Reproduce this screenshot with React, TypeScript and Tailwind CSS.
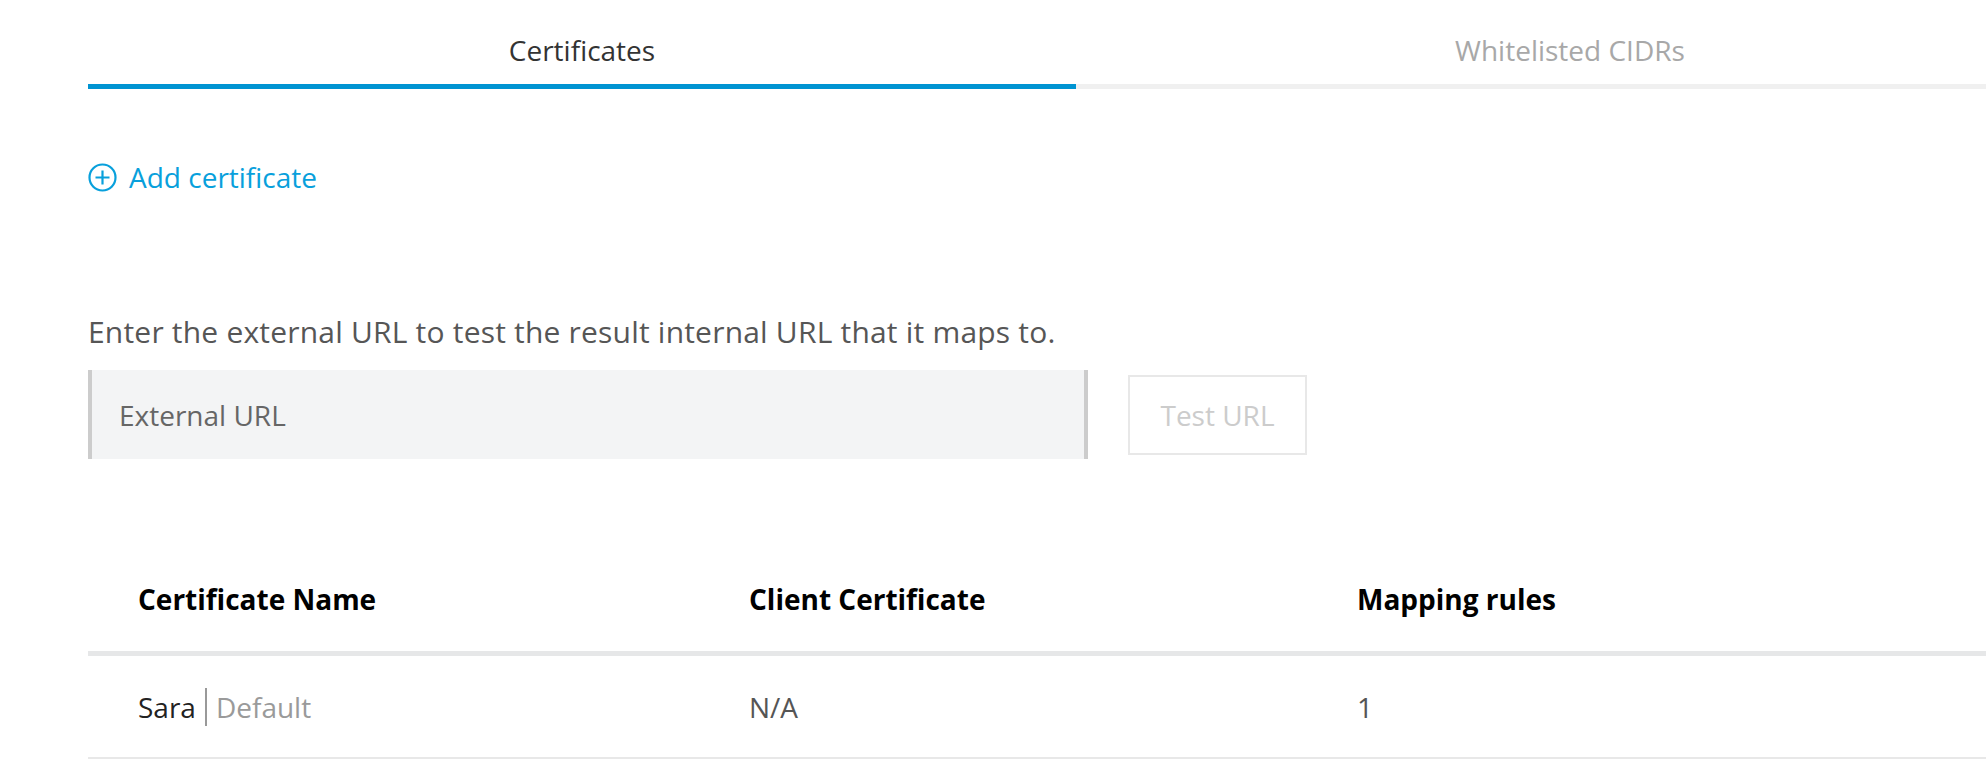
import { useState } from 'react'

const tabs = ['Certificates', 'Whitelisted CIDRs']

const rows = [{ name: 'Sara', tag: 'Default', client: 'N/A', rules: '1' }]

function PlusCircle() {
  return (
    <svg width="29" height="29" viewBox="0 0 29 29" fill="none" stroke="currentColor" strokeWidth="2.2">
      <circle cx="14.5" cy="14.5" r="13" />
      <path d="M14.5 7.5v14M7.5 14.5h14" />
    </svg>
  )
}

export default function App() {
  const [active, setActive] = useState(0)
  const [url, setUrl] = useState('')

  return (
    <div className="w-[1986px] h-[782px] overflow-hidden bg-white pl-[88px] font-['Open_Sans',sans-serif] text-[28px]">
      <div className="flex">
        {tabs.map((tab, i) => (
          <button
            key={tab}
            onClick={() => setActive(i)}
            className={
              i === active
                ? 'w-[988px] shrink-0 h-[89px] pt-[16px] flex items-center justify-center border-b-[5px] border-[#0094d2] text-[#333]'
                : 'w-[988px] shrink-0 h-[89px] pt-[16px] flex items-center justify-center border-b-[5px] border-[#f0f0f0] text-[#a8a8a8]'
            }
          >
            {tab}
          </button>
        ))}
      </div>

      <button className="mt-[70px] flex items-center gap-[12px] h-[36px] text-[#08a0dc]">
        <PlusCircle />
        <span>Add certificate</span>
      </button>

      <p className="mt-[117px] leading-[40px] text-[30px] tracking-[0.2px] text-[#565656]">
        Enter the external URL to test the result internal URL that it maps to.
      </p>

      <div className="mt-[18px] flex items-center gap-[40px]">
        <input
          value={url}
          onChange={(e) => setUrl(e.target.value)}
          placeholder="External URL"
          className="w-[1000px] h-[89px] bg-[#f3f4f5] border-x-4 border-[#cccccc] pl-[27px] text-[#333] placeholder:text-[#666] focus:outline-none"
        />
        <button className="w-[179px] h-[80px] border-2 border-[#e8e8e8] text-[#cccccc]">Test URL</button>
      </div>

      <div className="mt-[88px]">
        <div className="grid grid-cols-[661px_608px_1fr] h-[109px] border-b-[5px] border-[#e6e7e8] items-center font-bold text-black">
          <div className="pl-[50px]">Certificate Name</div>
          <div>Client Certificate</div>
          <div>Mapping rules</div>
        </div>
        {rows.map((r) => (
          <div
            key={r.name}
            className="grid grid-cols-[661px_608px_1fr] h-[103px] border-b-2 border-[#e8e8e8] items-center text-[#555]"
          >
            <div className="pl-[50px] flex items-center">
              <span className="text-[#222]">{r.name}</span>
              <span className="mx-[9px] w-[2px] h-[38px] bg-[#999]"></span>
              <span className="text-[#9a9a9a]">{r.tag}</span>
            </div>
            <div>{r.client}</div>
            <div>{r.rules}</div>
          </div>
        ))}
      </div>
    </div>
  )
}
